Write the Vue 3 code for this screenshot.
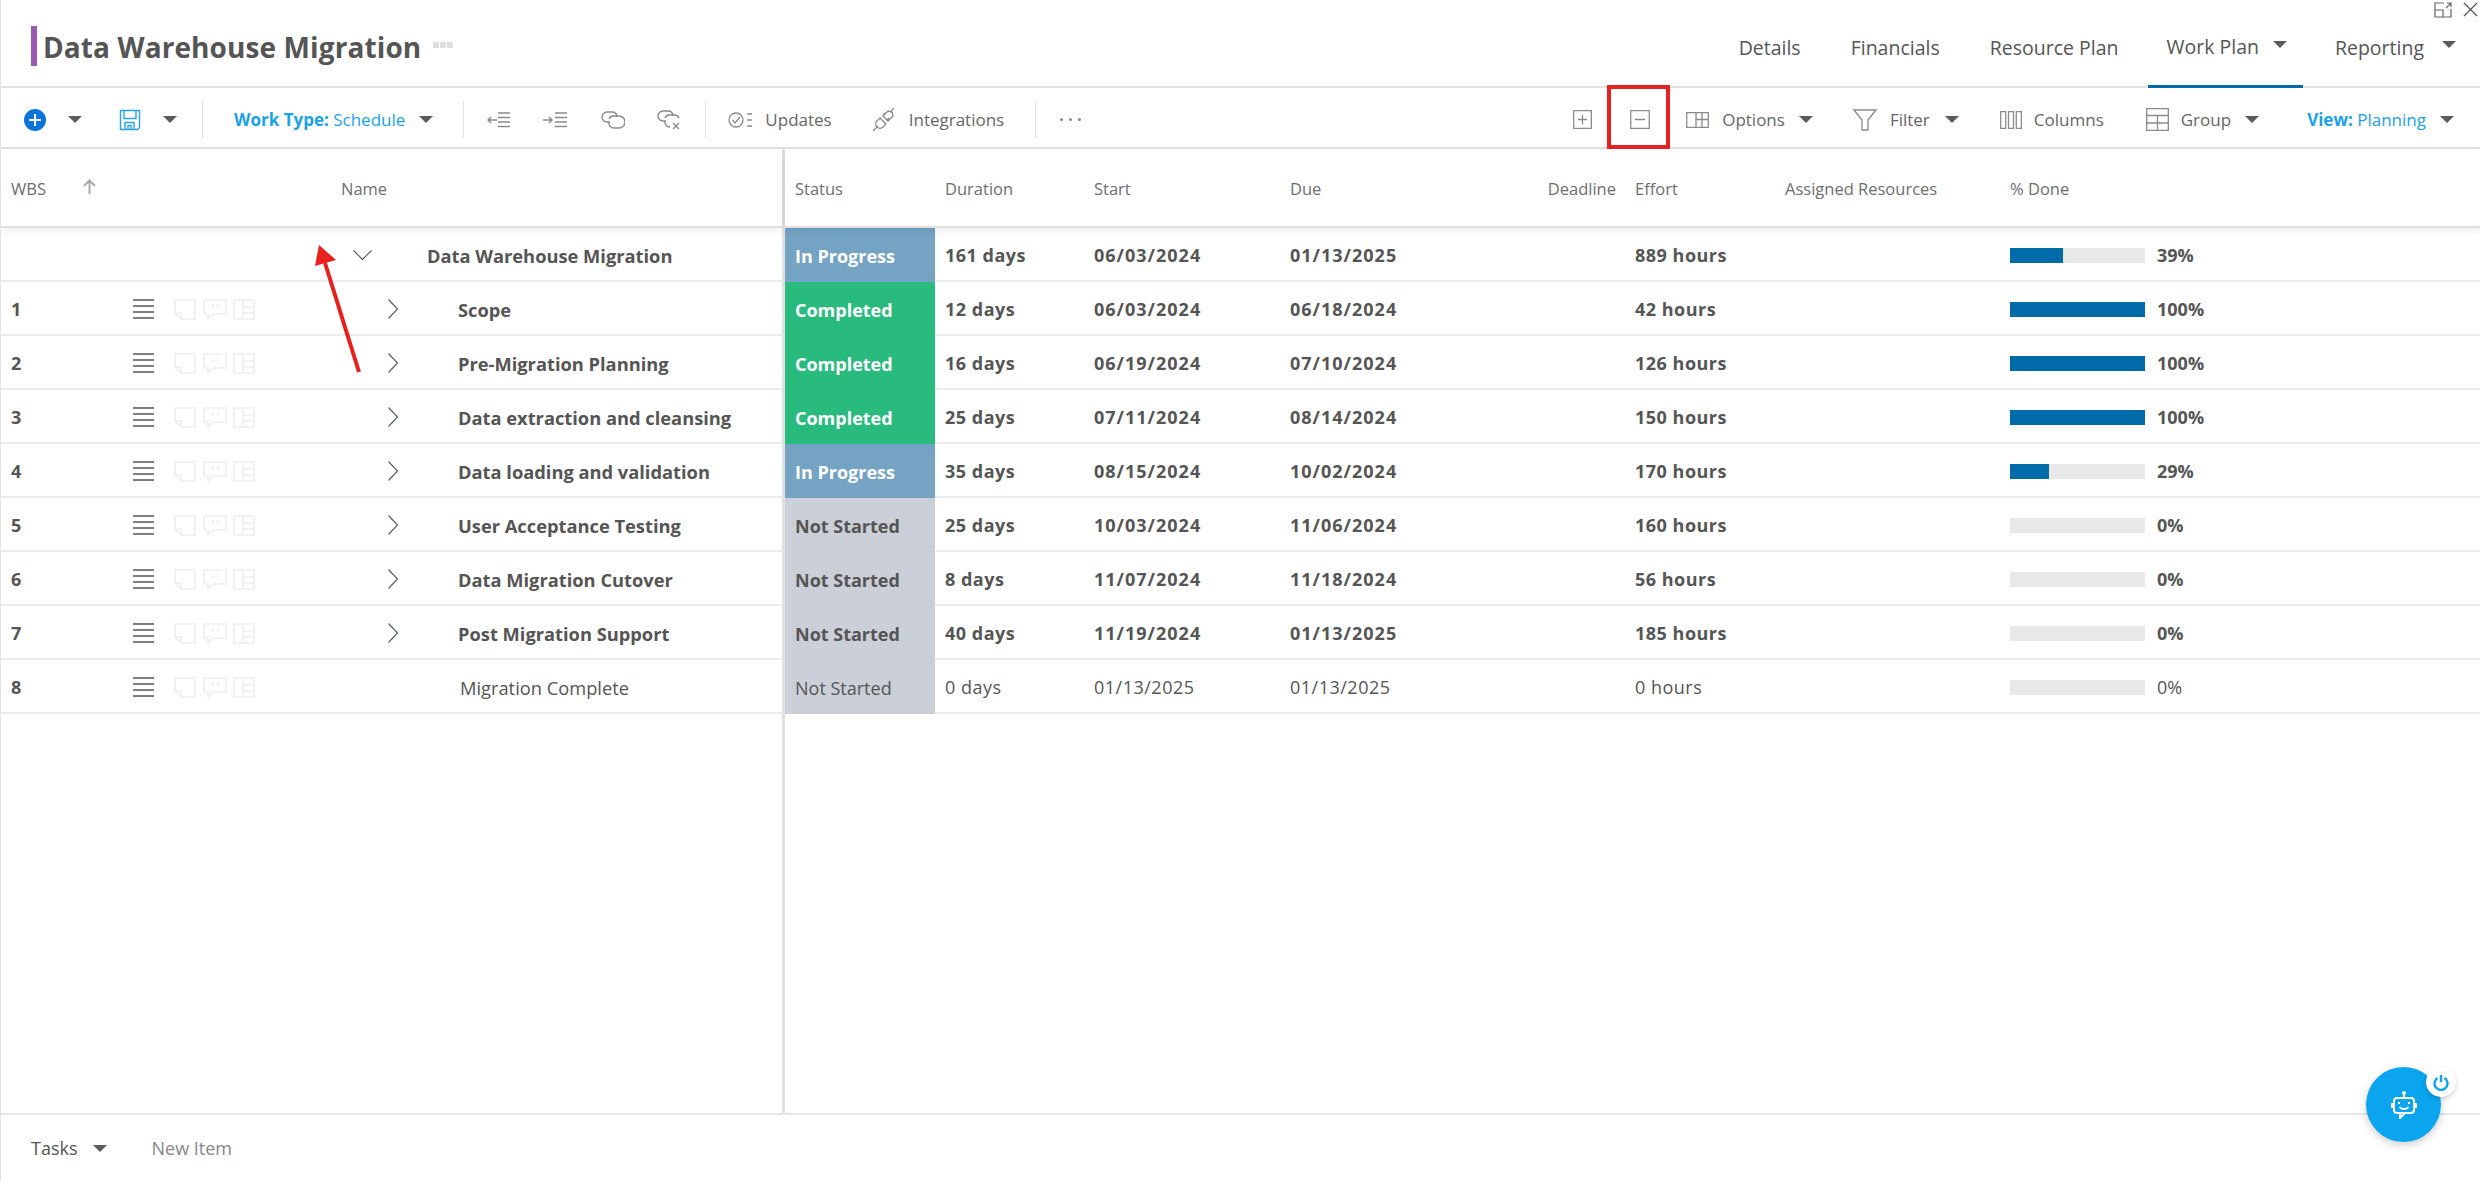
<template>
  <div class="page">
    <header class="top">
      <span class="mark"></span>
      <h1>Data Warehouse Migration</h1>
      <span class="title-dots"><i></i><i></i><i></i></span>
      <nav class="tabs">
        <a class="tab tab-details">Details</a>
        <a class="tab tab-fin">Financials</a>
        <a class="tab tab-res">Resource Plan</a>
        <a class="tab tab-work active">Work Plan <i class="caret"></i></a>
        <a class="tab tab-rep">Reporting <i class="caret"></i></a>
      </nav>
      <div class="window-btns">
        <svg width="18" height="16" viewBox="0 0 18 16" fill="none" stroke="#666" stroke-width="1.2">
          <path d="M10 1H1v14h16V7M1 8h8v7M12 6l5-5M13 1h4v4" />
        </svg>
        <svg width="15" height="15" viewBox="0 0 15 15" fill="none" stroke="#555" stroke-width="1.3">
          <path d="M1 1l13 13M14 1L1 14" />
        </svg>
      </div>
    </header>

    <div class="toolbar">
      <span class="add-btn">
        <svg width="22" height="22" viewBox="0 0 22 22">
          <circle cx="11" cy="11" r="11" fill="#0a74da" />
          <path d="M11 5v12M5 11h12" stroke="#fff" stroke-width="2" />
        </svg>
      </span>
      <i class="caret tb-c1"></i>
      <svg class="tb-save" width="22" height="22" viewBox="0 0 22 22" fill="none" stroke="#2aa3ee" stroke-width="1.4">
        <path d="M1.5 1.5h19v17l-2 2h-17zM5 1.5v8h12v-8M6 20.5v-7h9v7M9 20.5v-4h3v4" />
      </svg>
      <i class="caret tb-c2"></i>
      <span class="sep tb-s1"></span>
      <span class="blue tb-wt"><b>Work Type:</b> Schedule</span>
      <i class="caret tb-c3"></i>
      <span class="sep tb-s2"></span>
      <svg class="tb-out" width="24" height="16" viewBox="0 0 24 16" fill="none" stroke="#8a8a8a" stroke-width="1.4">
        <path d="M10 8H1M4 5L1 8l3 3M11 1h12M11 5.500h12M11 10h12M11 14.500h12" />
      </svg>
      <svg class="tb-in" width="25" height="16" viewBox="0 0 25 16" fill="none" stroke="#8a8a8a" stroke-width="1.4">
        <path d="M0 8h9M6 5l3 3-3 3M12 1h12M12 5.500h12M12 10h12M12 14.500h12" />
      </svg>
      <svg class="tb-link" width="24" height="18" viewBox="0 0 24 18" fill="none" stroke="#8a8a8a" stroke-width="1.4">
        <path d="M9 11H6a5 5 0 0 1 0-10h6a5 5 0 0 1 4 5" />
        <path d="M8 8a5 5 0 0 1 5-3h5a5.500 5.500 0 0 1 0 12h-5a5 5 0 0 1-5-6" />
      </svg>
      <svg class="tb-unlink" width="24" height="20" viewBox="0 0 24 20" fill="none" stroke="#8a8a8a" stroke-width="1.4">
        <path d="M9 11H6a5 5 0 0 1 0-10h6a5 5 0 0 1 4 5" />
        <path d="M8 8a5 5 0 0 1 5-3h5a5 5 0 0 1 4 3M13 17a5 5 0 0 1-5-6M16 13l6 6M22 13l-6 6" />
      </svg>
      <span class="sep tb-s3"></span>
      <svg class="tb-upd" width="24" height="16" viewBox="0 0 24 16" fill="none" stroke="#8a8a8a" stroke-width="1.3">
        <circle cx="8" cy="8" r="7" />
        <path d="M4.500 8l2.500 3 5-6M19 2h5M19 8h5M19 14h5" />
      </svg>
      <span class="tool tb-upd-t">Updates</span>
      <svg class="tb-int" width="23" height="24" viewBox="0 0 23 24" fill="none" stroke="#8a8a8a" stroke-width="1.3">
        <path d="M0 23l5-5M7 10l6 6-3 3a4 4 0 0 1-6-6zM10 8l5 5 5-5-1-4-4-1zM18 3l3-3M12 5l-2 2M16 10l-2 2" />
      </svg>
      <span class="tool tb-int-t">Integrations</span>
      <span class="sep tb-s4"></span>
      <span class="more tb-more"><i></i><i></i><i></i></span>

      <svg class="tb-plus" width="19" height="19" viewBox="0 0 19 19" fill="none" stroke="#8a8a8a" stroke-width="1.3">
        <path d="M.7.7h17.600v17.600H.7zM9.500 5v9M5 9.500h9" />
      </svg>
      <svg class="tb-minus" width="20" height="19" viewBox="0 0 20 19" fill="none" stroke="#8a8a8a" stroke-width="1.3">
        <path d="M.7.7h18.600v17.600H.7zM5 9.500h10" />
      </svg>
      <svg class="tb-opt" width="23" height="16" viewBox="0 0 23 16" fill="none" stroke="#8a8a8a" stroke-width="1.3">
        <path d="M.7.7h21.600v14.600H.7zM10 .7v14.600M16 .7v14.600M10 7.500h12" />
      </svg>
      <span class="tool tb-opt-t">Options</span>
      <i class="caret tb-c4"></i>
      <svg class="tb-fil" width="24" height="22" viewBox="0 0 24 22" fill="none" stroke="#8a8a8a" stroke-width="1.3">
        <path d="M1 1h22l-8 10v10h-6V11z" />
      </svg>
      <span class="tool tb-fil-t">Filter</span>
      <i class="caret tb-c5"></i>
      <svg class="tb-col" width="22" height="18" viewBox="0 0 22 18" fill="none" stroke="#8a8a8a" stroke-width="1.3">
        <path d="M.7.7h5v16.600h-5zM8.500.7h5v16.600h-5zM16.300.7h5v16.600h-5z" />
      </svg>
      <span class="tool tb-col-t">Columns</span>
      <svg class="tb-grp" width="23" height="23" viewBox="0 0 23 23" fill="none" stroke="#8a8a8a" stroke-width="1.3">
        <path d="M.7.7h21.600v21.600H.7zM.7 7.500h21.600M.7 15h21.600M11.500 7.500v14.800" />
      </svg>
      <span class="tool tb-grp-t">Group</span>
      <i class="caret tb-c6"></i>
      <span class="blue tb-view"><b>View:</b> Planning</span>
      <i class="caret tb-c7"></i>
    </div>

    <main class="board">
      <section class="left">
        <div class="lhead">
          <span class="wbs-h">WBS</span>
          <svg class="sort" width="15" height="15" viewBox="0 0 15 15" fill="none" stroke="#aaa" stroke-width="2">
            <path d="M7.500 15V2M2 7l5.500-5.500L13 7" />
          </svg>
          <span class="name-h">Name</span>
        </div>
        <div v-for="row in rows" :key="row.name" class="lrow" :class="row.kind">
          <span class="wbs">{{ row.wbs }}</span>
          <span class="acts">
            <template v-if="row.wbs">
              <svg width="21" height="20" viewBox="0 0 21 20" stroke="#555" stroke-width="1.5">
                <path d="M0 1h21M0 7h21M0 13h21M0 19h21" />
              </svg>
              <svg class="ghost g-note" width="22" height="21" viewBox="0 0 22 21" fill="none" stroke="#eee" stroke-width="1.6">
                <path d="M1 1h20v19H7l-6-6zM1 14h6v6" />
              </svg>
              <svg class="ghost g-chat" width="24" height="21" viewBox="0 0 24 21" fill="none" stroke="#eee" stroke-width="1.6">
                <path d="M1 1h22v14H10l-5 5v-5H1zM10 5v4M15 5v4" />
              </svg>
              <svg class="ghost g-grid" width="22" height="21" viewBox="0 0 22 21" fill="none" stroke="#eee" stroke-width="1.6">
                <path d="M1 1h20v19H1zM10 1v19M10 8h11M10 14h11" />
              </svg>
            </template>
          </span>
          <span class="chev">
            <svg v-if="row.kind === 'root'" width="19" height="10" viewBox="0 0 19 10" fill="none" stroke="#4a5866" stroke-width="1.1">
              <path d="M.5.500l9 9 9-9" />
            </svg>
            <svg v-else-if="row.kind === 'group'" width="10" height="20" viewBox="0 0 10 20" fill="none" stroke="#4a5866" stroke-width="1.1">
              <path d="M.5.500l9 9.500-9 9.500" />
            </svg>
          </span>
          <span class="name">{{ row.name }}</span>
        </div>
      </section>

      <section class="right">
        <div class="rhead">
          <span>Status</span><span>Duration</span><span>Start</span><span>Due</span>
          <span class="deadline">Deadline</span><span>Effort</span><span>Assigned Resources</span><span>% Done</span>
        </div>
        <div v-for="row in rows" :key="row.name" class="rrow" :class="{ light: row.kind === 'leaf' }">
          <span class="status" :class="statusClass(row.status)">{{ row.status }}</span>
          <span class="num">{{ row.duration }}</span>
          <span class="date">{{ row.start }}</span>
          <span class="date">{{ row.due }}</span>
          <span></span>
          <span class="num">{{ row.effort }}</span>
          <span></span>
          <span class="done">
            <span class="bar"><span class="fill" :style="{ width: row.done + '%' }"></span></span>
            <span class="pct">{{ row.done }}%</span>
          </span>
        </div>
      </section>
    </main>

    <footer class="foot">
      <span class="tasks">Tasks</span>
      <i class="caret"></i>
      <span class="new-item">New Item</span>
    </footer>

    <!-- annotations sitting over the screenshot -->
    <div class="red-box"></div>
    <svg class="red-arrow" width="60" height="130" viewBox="0 0 60 130">
      <path d="M52 127L18 18" stroke="#e8201f" stroke-width="4" />
      <path d="M12 0L8 21 29 15z" fill="#e8201f" />
    </svg>

    <div class="bot">
      <svg width="28" height="28" viewBox="0 0 28 28" fill="none" stroke="#fff" stroke-width="2">
        <rect x="4" y="7" width="20" height="15" rx="3" />
        <path d="M14 7V3M10 22v5l5-5M2 12v5M26 12v5" />
        <circle cx="14" cy="2" r="1" fill="#fff" />
        <path d="M9 11v2M19 11v2M9.500 16c2 2.500 7 2.500 9 0" />
      </svg>
      <span class="power">
        <svg width="16" height="17" viewBox="0 0 16 17" fill="none" stroke="#0aa5ee" stroke-width="2.400">
          <path d="M8 1v7M4.500 4a6.500 6.500 0 1 0 7 0" />
        </svg>
      </span>
    </div>
  </div>
</template>

<script setup>
const rows = [
  { wbs: '', name: 'Data Warehouse Migration', kind: 'root', status: 'In Progress', duration: '161 days', start: '06/03/2024', due: '01/13/2025', effort: '889 hours', done: 39 },
  { wbs: '1', name: 'Scope', kind: 'group', status: 'Completed', duration: '12 days', start: '06/03/2024', due: '06/18/2024', effort: '42 hours', done: 100 },
  { wbs: '2', name: 'Pre-Migration Planning', kind: 'group', status: 'Completed', duration: '16 days', start: '06/19/2024', due: '07/10/2024', effort: '126 hours', done: 100 },
  { wbs: '3', name: 'Data extraction and cleansing', kind: 'group', status: 'Completed', duration: '25 days', start: '07/11/2024', due: '08/14/2024', effort: '150 hours', done: 100 },
  { wbs: '4', name: 'Data loading and validation', kind: 'group', status: 'In Progress', duration: '35 days', start: '08/15/2024', due: '10/02/2024', effort: '170 hours', done: 29 },
  { wbs: '5', name: 'User Acceptance Testing', kind: 'group', status: 'Not Started', duration: '25 days', start: '10/03/2024', due: '11/06/2024', effort: '160 hours', done: 0 },
  { wbs: '6', name: 'Data Migration Cutover', kind: 'group', status: 'Not Started', duration: '8 days', start: '11/07/2024', due: '11/18/2024', effort: '56 hours', done: 0 },
  { wbs: '7', name: 'Post Migration Support', kind: 'group', status: 'Not Started', duration: '40 days', start: '11/19/2024', due: '01/13/2025', effort: '185 hours', done: 0 },
  { wbs: '8', name: 'Migration Complete', kind: 'leaf', status: 'Not Started', duration: '0 days', start: '01/13/2025', due: '01/13/2025', effort: '0 hours', done: 0 }
]

const statusClass = (status) => status.toLowerCase().replace(' ', '-')
</script>

<style scoped>
.page {
  position: relative;
  display: flex;
  flex-direction: column;
  width: 2480px;
  height: 1181px;
  overflow: hidden;
  background: #fff;
  color: #555;
  font-family: "Open Sans", "Noto Sans", sans-serif;
  font-size: 17px;
  box-sizing: border-box;
  border-left: 1px solid #e3e3e3;
}

.caret {
  display: inline-block;
  width: 0;
  height: 0;
  border-left: 7px solid transparent;
  border-right: 7px solid transparent;
  border-top: 7px solid #5b5b5b;
}

/* title bar */
.top {
  display: flex;
  align-items: center;
  height: 88px;
  flex: none;
  border-bottom: 2px solid #e2e2e2;
  box-sizing: border-box;
  padding-left: 30px;
  position: relative;
}
.mark { width: 6px; height: 40px; background: #9b59b6; margin-top: 6px; }
h1 {
  margin: 8px 0 0 6px;
  font-size: 28px;
  font-weight: 700;
  letter-spacing: 0.1px;
  color: #555;
}
.title-dots { display: flex; gap: 1px; margin: 4px 0 0 12px; }
.title-dots i { width: 6px; height: 6px; background: #ddd; border-radius: 1px; }

.tabs { display: flex; align-items: center; height: 100%; margin-left: auto; }
.tab { display: flex; align-items: center; height: 100%; font-size: 19.5px; box-sizing: border-box; white-space: nowrap; padding-top: 8px; }
.tab .caret { margin: -5px 0 0 14px; }
.tab-fin { margin-left: 50px; }
.tab-res { margin-left: 50px; }
.tab-work { margin-left: 30px; padding: 8px 16px 0 18px; border-bottom: 3px solid #006ba9; margin-bottom: -2px; height: calc(100% + 2px); }
.tab-rep { margin: 0 24px 0 32px; }
.tab-rep .caret { margin-left: 18px; }

.window-btns { position: absolute; right: 2px; top: 2px; display: flex; gap: 11px; }

/* toolbar */
.toolbar {
  display: flex;
  align-items: center;
  height: 61px;
  flex: none;
  border-bottom: 2px solid #e2e2e2;
  box-sizing: border-box;
  padding: 4px 0 0 23px;
  white-space: nowrap;
  font-size: 17px;
}
.add-btn { display: flex; }
.sep { width: 1px; height: 37px; background: #e4e4e4; }
.blue { color: #1ba1e8; }
.blue b { font-weight: 700; }
.tool { color: #666; }
.more { display: flex; gap: 6px; }
.more i { width: 3px; height: 3px; background: #888; border-radius: 50%; }

.tb-c1 { margin-left: 22px; }
.tb-save { margin-left: 37px; }
.tb-c2 { margin-left: 22px; }
.tb-s1 { margin-left: 25px; }
.tb-wt { margin-left: 31px; }
.tb-c3 { margin-left: 14px; }
.tb-s2 { margin-left: 30px; }
.tb-out { margin-left: 23px; }
.tb-in { margin-left: 32px; }
.tb-link { margin-left: 33px; }
.tb-unlink { margin-left: 32px; }
.tb-s3 { margin-left: 24px; }
.tb-upd { margin-left: 22px; }
.tb-upd-t { margin-left: 13px; }
.tb-int { margin-left: 41px; }
.tb-int-t { margin-left: 13px; }
.tb-s4 { margin-left: 31px; }
.tb-more { margin-left: 24px; }

.tb-plus { margin-left: auto; }
.tb-minus { margin-left: 38px; }
.tb-opt { margin-left: 36px; }
.tb-opt-t { margin-left: 13px; }
.tb-c4 { margin-left: 14px; }
.tb-fil { margin-left: 40px; }
.tb-fil-t { margin-left: 13px; }
.tb-c5 { margin-left: 15px; }
.tb-col { margin-left: 41px; }
.tb-col-t { margin-left: 12px; }
.tb-grp { margin-left: 42px; }
.tb-grp-t { margin-left: 12px; }
.tb-c6 { margin-left: 14px; }
.tb-view { margin-left: 48px; }
.tb-c7 { margin: 0 26px 0 14px; }

/* grid */
.board { display: flex; flex: 1; min-height: 0; }
.left { width: 781px; flex: none; border-right: 3px solid #e2e2e4; box-sizing: content-box; }
.right { flex: 1; }

.lhead, .rhead {
  height: 79px;
  border-bottom: 2px solid #e0e0e0;
  box-shadow: 0 3px 8px rgba(0, 0, 0, 0.07);
  box-sizing: border-box;
  color: #6e6e6e;
  font-size: 16.5px;
  position: relative;
  padding-top: 2px;
}
.lhead { display: flex; align-items: center; padding-left: 10px; }
.sort { margin-left: 36px; margin-top: -4px; }
.name-h { margin-left: 244px; }

.rhead, .rrow {
  display: grid;
  grid-template-columns: 150px 149px 196px 196px 149px 150px 225px 1fr;
  align-items: center;
}
.rhead > span { padding-left: 10px; }
.rhead > .deadline { text-align: right; padding: 0 9px 0 0; }

.lrow, .rrow {
  height: 54px;
  border-bottom: 2px solid #ececec;
  box-sizing: border-box;
  font-weight: 700;
  font-size: 18px;
  padding-top: 2px;
}
.lrow { display: flex; align-items: center; }
.wbs { width: 132px; padding-left: 10px; box-sizing: border-box; flex: none; }
.acts { width: 220px; flex: none; display: flex; align-items: center; }
.acts svg { flex: none; }
.g-note { margin-left: 20px; }
.g-chat { margin-left: 7px; }
.g-grid { margin-left: 6px; }
.chev { display: flex; align-items: center; flex: none; width: 74px; }
.group .chev { padding-left: 35px; width: 105px; box-sizing: border-box; }
.leaf .chev { width: 107px; }
.name { font-size: 18.3px; }
.lrow.leaf { font-weight: 400; }
.lrow.leaf .wbs { font-weight: 700; }
.rrow.light { font-weight: 400; }
.num { letter-spacing: 0.5px; }
.date { letter-spacing: 1px; }
.light .date { letter-spacing: 0.5px; }

.rrow > span { padding-left: 10px; }
.rrow > .status {
  align-self: stretch;
  display: flex;
  align-items: center;
  margin: -2px 0 -2px;
  padding-top: 2px;
  color: #fff;
  font-weight: 700;
}
.rrow.light > .status { font-weight: 400; }
.in-progress { background: #74a3c4; }
.completed { background: #28bb7d; }
.rrow > .not-started { background: #cbcfd8; color: #555; }

.done { display: flex; align-items: center; }
.bar { width: 135px; height: 15px; background: #e8e8e8; flex: none; }
.fill { display: block; height: 100%; background: #006ba9; }
.pct { margin-left: 12px; }

.foot {
  height: 68px;
  flex: none;
  border-top: 2px solid #e6e6e6;
  box-sizing: border-box;
  display: flex;
  align-items: center;
  padding-left: 30px;
  font-size: 18px;
}
.tasks { color: #555; }
.foot .caret { margin-left: 15px; }
.new-item { margin-left: 45px; color: #888; }

/* overlays */
.red-box {
  position: absolute;
  left: 1606px;
  top: 85px;
  width: 63px;
  height: 64px;
  border: 4px solid #e8201f;
  box-sizing: border-box;
}
.red-arrow { position: absolute; left: 306px; top: 245px; }

.bot {
  position: absolute;
  left: 2365px;
  top: 1067px;
  width: 75px;
  height: 75px;
  border-radius: 50%;
  background: #0aa5ee;
  box-shadow: 0 3px 8px rgba(0, 0, 0, 0.2);
  display: flex;
  align-items: center;
  justify-content: center;
}
.power {
  position: absolute;
  right: -15px;
  top: 0;
  width: 30px;
  height: 30px;
  border-radius: 50%;
  background: #fff;
  box-shadow: 0 2px 5px rgba(0, 0, 0, 0.18);
  display: flex;
  align-items: center;
  justify-content: center;
}
</style>

<style>
html, body { margin: 0; background: #fff; }
</style>
